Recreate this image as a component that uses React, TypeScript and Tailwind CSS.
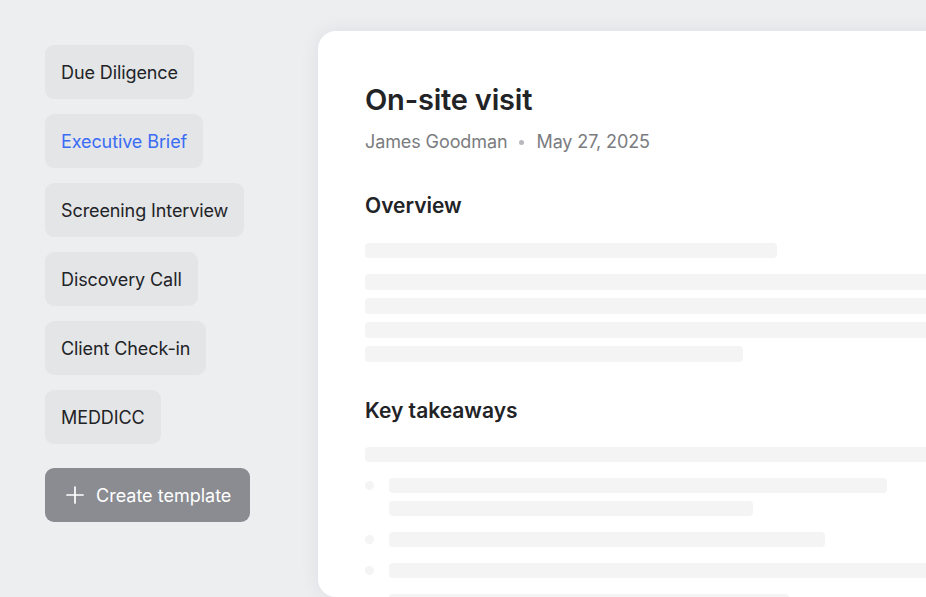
const templates = [
  { name: "Due Diligence", active: false },
  { name: "Executive Brief", active: true },
  { name: "Screening Interview", active: false },
  { name: "Discovery Call", active: false },
  { name: "Client Check-in", active: false },
  { name: "MEDDICC", active: false },
];

function Bar({ w }: { w: string }) {
  return <div className={`h-[15px] shrink-0 rounded-[4px] bg-[#f4f4f5] ${w}`} />;
}

function PlusIcon() {
  return (
    <svg width="18" height="18" viewBox="0 0 18 18" fill="none" stroke="currentColor" strokeWidth="1.7" strokeLinecap="round">
      <path d="M9 1v16M1 9h16" />
    </svg>
  );
}

export default function App() {
  return (
    <div
      className="flex h-[597px] w-[926px] overflow-hidden bg-[#edeef0] text-[#222326]"
      style={{ fontFamily: "Inter, 'Noto Sans', sans-serif" }}
    >
      {/* template list */}
      <div className="flex w-[318px] shrink-0 flex-col items-start pl-[45px] pt-[45px]">
        <div className="flex flex-col items-start gap-[15px]">
          {templates.map((t) => (
            <div
              key={t.name}
              className={`flex h-[54px] items-center rounded-[9px] bg-[#e4e5e7] px-4 text-[18px] tracking-[-0.1px] ${
                t.active ? "text-[#3a6cf4]" : "text-[#222326]"
              }`}
            >
              {t.name}
            </div>
          ))}
        </div>
        <button className="mt-[24px] flex h-[54px] items-center gap-[12px] rounded-[9px] bg-[#8a8c92] pl-[21px] pr-[19px] text-[18px] text-white">
          <PlusIcon />
          Create template
        </button>
      </div>

      {/* document preview */}
      <div className="mt-[31px] w-[700px] shrink-0 rounded-[18px] bg-white pl-[47px] pt-[51px] shadow-[0_0_20px_rgba(20,24,40,0.07)]">
        <h1 className="text-[29px] leading-[36px] font-semibold tracking-[-0.2px] text-[#222326]">On-site visit</h1>
        <div className="mt-[12px] flex items-center text-[18px] leading-[24px] tracking-[-0.1px] text-[#7b7c80]">
          <span>James Goodman</span>
          <span className="mx-[12px] h-[5px] w-[5px] rounded-full bg-[#b8b9bc]" />
          <span>May 27, 2025</span>
        </div>

        <h2 className="mt-[38px] text-[21px] leading-[28px] font-semibold text-[#222326]">Overview</h2>
        <div className="mt-[23px] flex flex-col">
          <Bar w="w-[412px]" />
          <div className="mt-[16px] flex flex-col gap-[8px]">
            <div className="h-[16px] w-full rounded-[4px] bg-[#f4f4f5]" />
            <div className="h-[16px] w-full rounded-[4px] bg-[#f4f4f5]" />
            <div className="h-[16px] w-full rounded-[4px] bg-[#f4f4f5]" />
            <div className="h-[16px] w-[378px] rounded-[4px] bg-[#f4f4f5]" />
          </div>
        </div>

        <h2 className="mt-[35px] text-[21px] leading-[28px] font-semibold text-[#222326]">Key takeaways</h2>
        <div className="mt-[22px]">
          <Bar w="w-full" />
        </div>
        <div className="mt-[16px] flex flex-col gap-[16px]">
          {[["w-[498px]", "w-[364px]"], ["w-[436px]"], ["w-full"], ["w-[400px]"]].map((lines, i) => (
            <div key={i} className="flex items-start gap-[15px]">
              <div className="mt-[3px] h-[9px] w-[9px] shrink-0 rounded-full bg-[#f4f4f5]" />
              <div className="flex flex-1 flex-col gap-[8px]">
                {lines.map((w, j) => (
                  <Bar key={j} w={w} />
                ))}
              </div>
            </div>
          ))}
        </div>
      </div>
    </div>
  );
}
